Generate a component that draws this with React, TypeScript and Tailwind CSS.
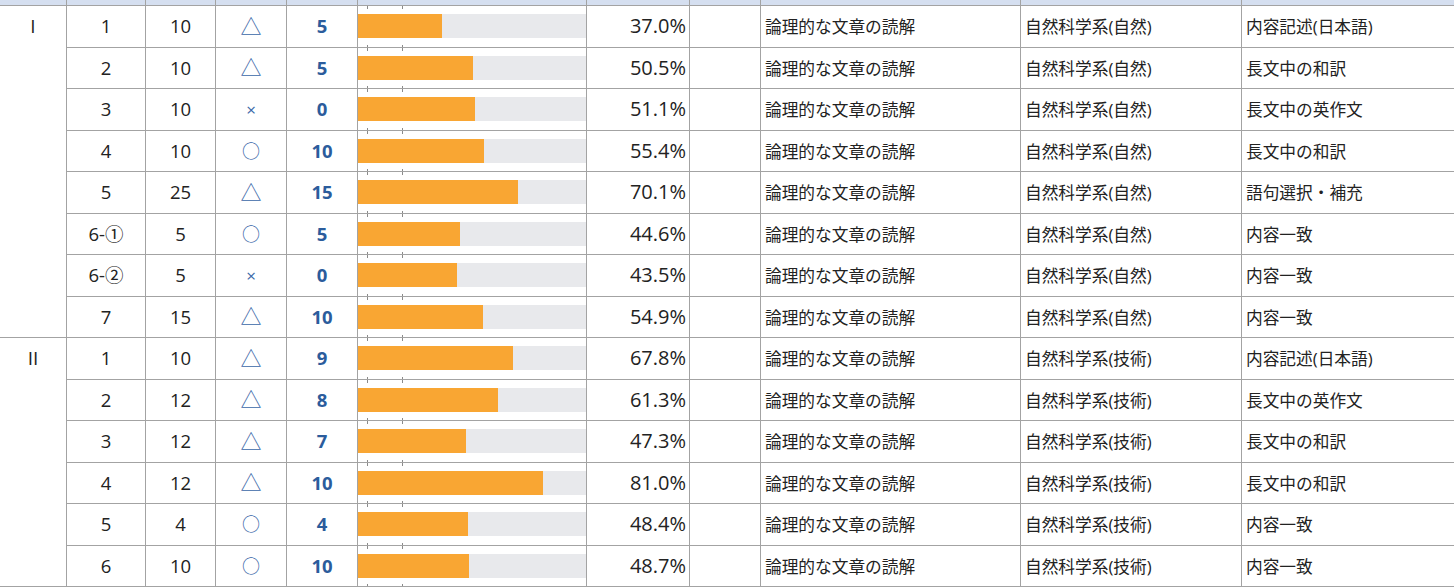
import React from "react";

type Row = { no: string; pts: number; mark: string; score: number; pct: number; type: string };

const groups: { label: string; area: string; rows: Row[] }[] = [
  {
    label: "I",
    area: "自然科学系(自然)",
    rows: [
      { no: "1", pts: 10, mark: "△", score: 5, pct: 37.0, type: "内容記述(日本語)" },
      { no: "2", pts: 10, mark: "△", score: 5, pct: 50.5, type: "長文中の和訳" },
      { no: "3", pts: 10, mark: "×", score: 0, pct: 51.1, type: "長文中の英作文" },
      { no: "4", pts: 10, mark: "○", score: 10, pct: 55.4, type: "長文中の和訳" },
      { no: "5", pts: 25, mark: "△", score: 15, pct: 70.1, type: "語句選択・補充" },
      { no: "6-①", pts: 5, mark: "○", score: 5, pct: 44.6, type: "内容一致" },
      { no: "6-②", pts: 5, mark: "×", score: 0, pct: 43.5, type: "内容一致" },
      { no: "7", pts: 15, mark: "△", score: 10, pct: 54.9, type: "内容一致" },
    ],
  },
  {
    label: "II",
    area: "自然科学系(技術)",
    rows: [
      { no: "1", pts: 10, mark: "△", score: 9, pct: 67.8, type: "内容記述(日本語)" },
      { no: "2", pts: 12, mark: "△", score: 8, pct: 61.3, type: "長文中の英作文" },
      { no: "3", pts: 12, mark: "△", score: 7, pct: 47.3, type: "長文中の和訳" },
      { no: "4", pts: 12, mark: "△", score: 10, pct: 81.0, type: "長文中の和訳" },
      { no: "5", pts: 4, mark: "○", score: 4, pct: 48.4, type: "内容一致" },
      { no: "6", pts: 10, mark: "○", score: 10, pct: 48.7, type: "内容一致" },
    ],
  },
];

function Mark({ m }: { m: string }) {
  if (m === "△") return <span className="text-[21px] leading-none text-[#3a67a8]">△</span>;
  if (m === "○") return <span className="text-[18px] leading-none text-[#3a67a8]">○</span>;
  return <span className="text-[17px] leading-none text-[#3a67a8]">×</span>;
}

function DataRow({ r, area }: { r: Row; area: string }) {
  return (
    <div className="flex h-[41.5px] border-b border-[#a3a3a3] last:h-[40.5px] last:border-b-0">
      <div className="flex w-[79px] shrink-0 items-center justify-center border-r border-[#a3a3a3]">{r.no}</div>
      <div className="flex w-[70px] shrink-0 items-center justify-center border-r border-[#a3a3a3]">{r.pts}</div>
      <div className="flex w-[71px] shrink-0 items-center justify-center border-r border-[#a3a3a3]">
        <Mark m={r.mark} />
      </div>
      <div className="flex w-[71px] shrink-0 items-center justify-center border-r border-[#a3a3a3] text-[18.5px] font-bold text-[#2b5c9c]">
        {r.score}
      </div>
      <div className="relative flex w-[229px] shrink-0 items-center border-r border-[#a3a3a3]">
        <div className="absolute left-[9px] top-0 h-[3px] w-px bg-[#8a8a8a]" />
        <div className="absolute left-[44px] top-0 h-[3px] w-px bg-[#8a8a8a]" />
        <div className="absolute bottom-0 left-[9px] h-[2px] w-px bg-[#8a8a8a]" />
        <div className="absolute bottom-0 left-[44px] h-[2px] w-px bg-[#8a8a8a]" />
        <div className="h-[24px] w-full bg-[#e8e9ec]">
          <div className="h-full bg-[#f9a633]" style={{ width: `${r.pct}%` }} />
        </div>
      </div>
      <div className="flex w-[103px] shrink-0 items-center justify-end border-r border-[#a3a3a3] pr-[3px] text-[20px]">
        {r.pct.toFixed(1)}%
      </div>
      <div className="w-[71px] shrink-0 border-r border-[#a3a3a3]" />
      <div className="flex w-[260px] shrink-0 items-center border-r border-[#a3a3a3] pl-[4px] pt-px text-[16.7px]">
        論理的な文章の読解
      </div>
      <div className="flex w-[221px] shrink-0 items-center border-r border-[#a3a3a3] pl-[4px] pt-px text-[16.7px]">
        {area}
      </div>
      <div className="flex flex-1 items-center pl-[4px] pt-px text-[16.7px]">{r.type}</div>
    </div>
  );
}

export default function App() {
  const headerCols = [67, 79, 70, 71, 71, 229, 103, 71, 260, 221];
  return (
    <div
      className="h-[587px] w-[1454px] overflow-hidden bg-white text-[18.5px] text-[#222222]"
      style={{ fontFamily: '"Open Sans", "Noto Sans CJK JP", sans-serif' }}
    >
      <div className="flex h-[6px] border-b border-[#a3a3a3] bg-[#d5dff0]">
        {headerCols.map((w, i) => (
          <div key={i} className="shrink-0 border-r border-[#a3a3a3]" style={{ width: w }} />
        ))}
        <div className="flex-1" />
      </div>
      {groups.map((g) => (
        <div key={g.label} className="flex border-b border-[#a3a3a3]">
          <div className="w-[67px] shrink-0 border-r border-[#a3a3a3]">
            <div className="flex h-[40.5px] items-center justify-center text-[19px]">{g.label}</div>
          </div>
          <div className="flex flex-1 flex-col">
            {g.rows.map((r, i) => (
              <DataRow key={i} r={r} area={g.area} />
            ))}
          </div>
        </div>
      ))}
    </div>
  );
}
